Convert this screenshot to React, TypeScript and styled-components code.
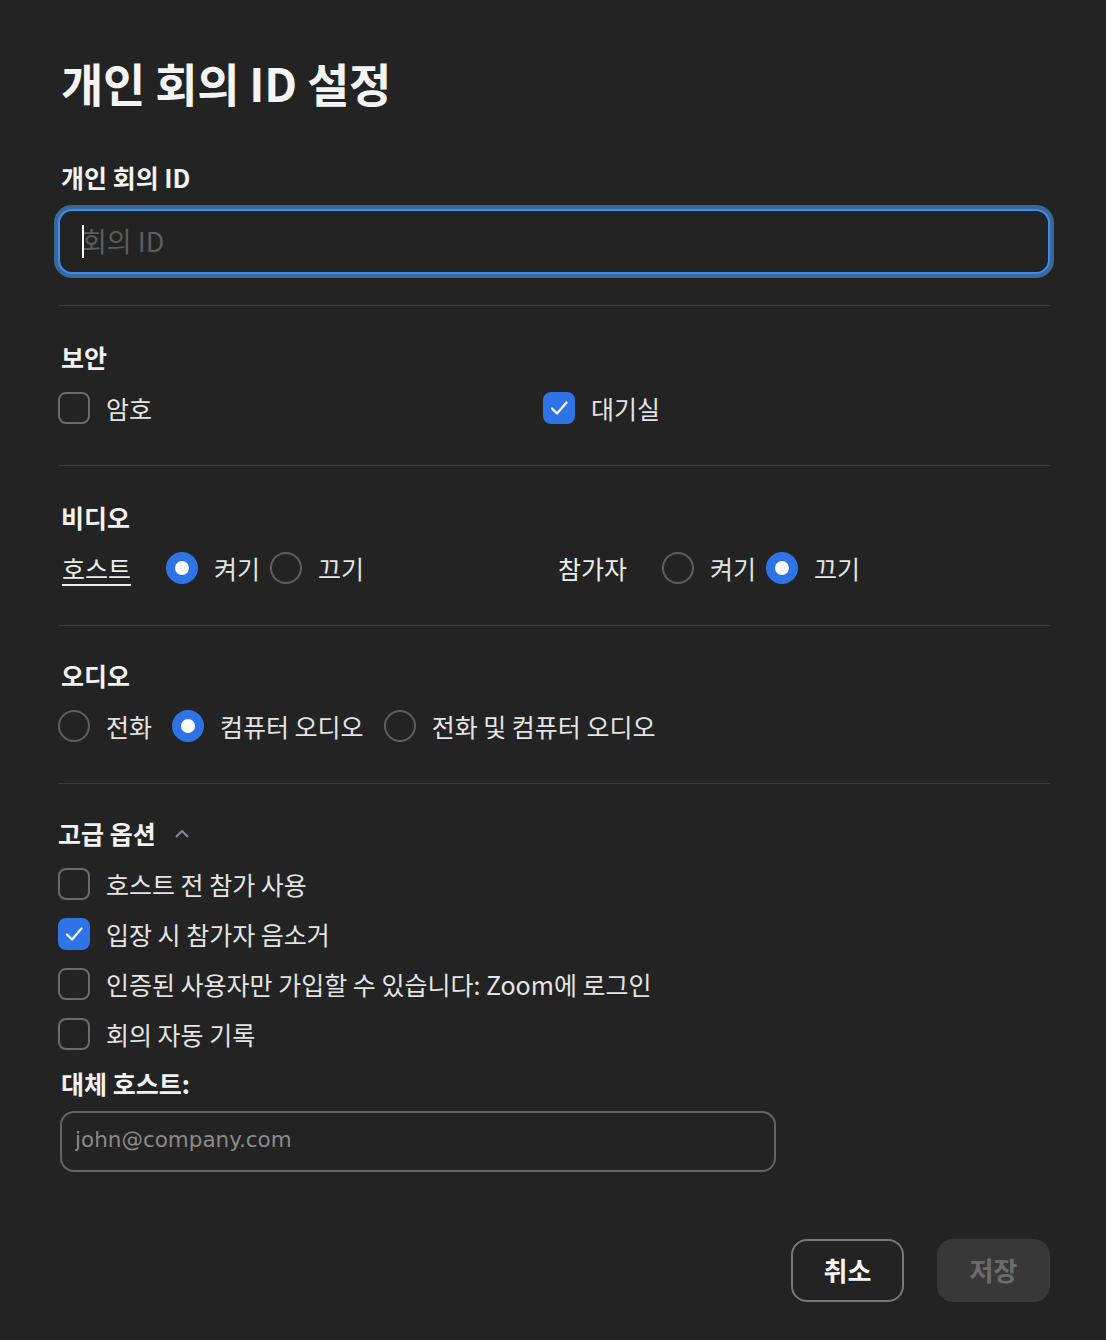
import React from "react";
import styled, { createGlobalStyle } from "styled-components";

const Global = createGlobalStyle`
  html, body { margin: 0; padding: 0; background: #232323; }
  body { font-family: "Noto Sans CJK KR", "Noto Sans", sans-serif; color: #e6e6e6; }
  * { box-sizing: border-box; }
`;

const Page = styled.div`
  width: 1106px;
  min-height: 1340px;
  background: #232323;
  padding: 56px 56px 0 58px;
  display: flex;
  flex-direction: column;
`;

const Title = styled.h1`
  margin: 0;
  height: 52px;
  line-height: 52px;
  padding-left: 3px;
  font-size: 46px;
  font-weight: 700;
  color: #f4f4f4;
  letter-spacing: -0.3px;
`;

const Heading = styled.div<{ $flush?: boolean }>`
  height: 32px;
  line-height: 32px;
  padding-left: ${(p) => (p.$flush ? "0" : "3px")};
  font-size: 25px;
  font-weight: 700;
  color: #f2f2f2;
  display: flex;
  align-items: center;
  gap: 19px;
`;

const TopBlock = styled.div`
  margin-top: 53px;
  padding-bottom: 31px;
  display: flex;
  flex-direction: column;
  gap: 16px;
`;

const FieldWrap = styled.div`
  position: relative;
  width: 992px;
`;

const IdInput = styled.input`
  width: 100%;
  height: 65px;
  border: 2px solid #3a8df8;
  border-radius: 14px;
  box-shadow: 0 0 0 4px #3a6997;
  background: #232323;
  padding: 0 20px 2px 22px;
  font-family: "Noto Sans CJK KR", "Noto Sans", sans-serif;
  font-size: 27px;
  color: #eeeeee;
  outline: none;
  &::placeholder { color: #5c5c5c; }
`;

const Caret = styled.span`
  position: absolute;
  left: 24px;
  top: 16px;
  width: 2px;
  height: 33px;
  background: #ffffff;
`;

const Section = styled.section<{ $top?: number }>`
  border-top: 1px solid #3c3c3c;
  padding: ${(p) => p.$top ?? 35}px 0 41px;
  display: flex;
  flex-direction: column;
  gap: 19px;
`;

const Grid = styled.div<{ $cols: string }>`
  display: grid;
  grid-template-columns: ${(p) => p.$cols};
  align-items: center;
`;

const Row = styled.div`
  height: 32px;
  display: flex;
  align-items: center;
`;

const Option = styled.label`
  display: flex;
  align-items: center;
  gap: 16px;
  height: 32px;
  font-size: 25px;
  color: #e4e4e4;
  cursor: pointer;
`;

const Box = styled.span<{ $checked?: boolean }>`
  width: 32px;
  height: 32px;
  flex: none;
  border-radius: 8px;
  border: 2px solid ${(p) => (p.$checked ? "#2f74e6" : "#6a6a6a")};
  background: ${(p) => (p.$checked ? "#2f74e6" : "transparent")};
  display: flex;
  align-items: center;
  justify-content: center;
`;

const Radio = styled.span<{ $checked?: boolean }>`
  width: 32px;
  height: 32px;
  flex: none;
  border-radius: 50%;
  border: 2px solid ${(p) => (p.$checked ? "#2f74e6" : "#5f5f5f")};
  background: ${(p) => (p.$checked ? "#2f74e6" : "transparent")};
  display: flex;
  align-items: center;
  justify-content: center;
  &::after {
    content: "";
    display: ${(p) => (p.$checked ? "block" : "none")};
    width: 14px;
    height: 14px;
    border-radius: 50%;
    background: #ffffff;
  }
`;

const RowLabel = styled.span<{ $underline?: boolean }>`
  width: 108px;
  flex: none;
  padding-left: 4px;
  font-size: 25px;
  color: #ececec;
  text-decoration: ${(p) => (p.$underline ? "underline" : "none")};
  text-underline-offset: 5px;
  text-decoration-thickness: 1.5px;
`;

const RadioGroup = styled.div<{ $gap: number }>`
  display: flex;
  align-items: center;
  gap: ${(p) => p.$gap}px;
`;

const List = styled.div`
  display: flex;
  flex-direction: column;
  gap: 18px;
`;

const AltBlock = styled.div`
  margin-top: -2px;
  display: flex;
  flex-direction: column;
  gap: 12px;
`;

const AltInput = styled.input`
  margin-left: 2px;
  width: 716px;
  height: 61px;
  border: 2px solid #646464;
  border-radius: 14px;
  background: #232323;
  padding: 0 13px 4px;
  font-family: "DejaVu Sans", "Noto Sans", sans-serif;
  font-size: 21.5px;
  color: #e0e0e0;
  outline: none;
  &::placeholder { color: #8a8a8a; }
`;

const Footer = styled.div`
  margin-top: 48px;
  width: 992px;
  display: flex;
  justify-content: flex-end;
  gap: 33px;
`;

const Button = styled.button<{ $primary?: boolean }>`
  width: 113px;
  height: 63px;
  border-radius: 16px;
  border: 2px solid ${(p) => (p.$primary ? "#383838" : "#787878")};
  background: ${(p) => (p.$primary ? "#383838" : "transparent")};
  color: ${(p) => (p.$primary ? "#6c6c6c" : "#f4f4f4")};
  font-family: "Noto Sans CJK KR", "Noto Sans", sans-serif;
  font-size: 26px;
  font-weight: 700;
  padding: 0 0 2px;
  cursor: pointer;
`;

const Check = () => (
  <svg width="24" height="24" viewBox="0 0 24 24" fill="none">
    <path d="M5 12.5 L10 17.5 L19.5 6.5" stroke="#ffffff" strokeWidth="2.2" strokeLinecap="round" strokeLinejoin="round" />
  </svg>
);

const Chevron = () => (
  <svg width="14" height="9" viewBox="0 0 14 9" fill="none">
    <path d="M1.5 7.5 L7 2 L12.5 7.5" stroke="#8686a0" strokeWidth="2" strokeLinecap="round" strokeLinejoin="round" />
  </svg>
);

const CheckOption = ({ label, checked }: { label: string; checked?: boolean }) => (
  <Option>
    <Box $checked={checked}>{checked && <Check />}</Box>
    {label}
  </Option>
);

const RadioOption = ({ label, checked }: { label: string; checked?: boolean }) => (
  <Option>
    <Radio $checked={checked} />
    {label}
  </Option>
);

export default function App() {
  return (
    <>
      <Global />
      <Page>
        <Title>개인 회의 ID 설정</Title>
        <TopBlock>
          <Heading>개인 회의 ID</Heading>
          <FieldWrap>
            <IdInput placeholder="회의 ID" />
            <Caret />
          </FieldWrap>
        </TopBlock>

        <Section>
          <Heading>보안</Heading>
          <Grid $cols="485px 1fr">
            <CheckOption label="암호" />
            <CheckOption label="대기실" checked />
          </Grid>
        </Section>

        <Section>
          <Heading>비디오</Heading>
          <Grid $cols="496px 1fr">
            <Row>
              <RowLabel $underline>호스트</RowLabel>
              <RadioGroup $gap={10}>
                <RadioOption label="켜기" checked />
                <RadioOption label="끄기" />
              </RadioGroup>
            </Row>
            <Row>
              <RowLabel>참가자</RowLabel>
              <RadioGroup $gap={10}>
                <RadioOption label="켜기" />
                <RadioOption label="끄기" checked />
              </RadioGroup>
            </Row>
          </Grid>
        </Section>

        <Section $top={33}>
          <Heading>오디오</Heading>
          <RadioGroup $gap={20}>
            <RadioOption label="전화" />
            <RadioOption label="컴퓨터 오디오" checked />
            <RadioOption label="전화 및 컴퓨터 오디오" />
          </RadioGroup>
        </Section>

        <Section $top={33}>
          <Heading $flush>
            고급 옵션
            <Chevron />
          </Heading>
          <List>
            <CheckOption label="호스트 전 참가 사용" />
            <CheckOption label="입장 시 참가자 음소거" checked />
            <CheckOption label="인증된 사용자만 가입할 수 있습니다: Zoom에 로그인" />
            <CheckOption label="회의 자동 기록" />
          </List>
          <AltBlock>
            <Heading>대체 호스트:</Heading>
            <AltInput placeholder="john@company.com" />
          </AltBlock>
          <Footer>
            <Button>취소</Button>
            <Button $primary>저장</Button>
          </Footer>
        </Section>
      </Page>
    </>
  );
}
